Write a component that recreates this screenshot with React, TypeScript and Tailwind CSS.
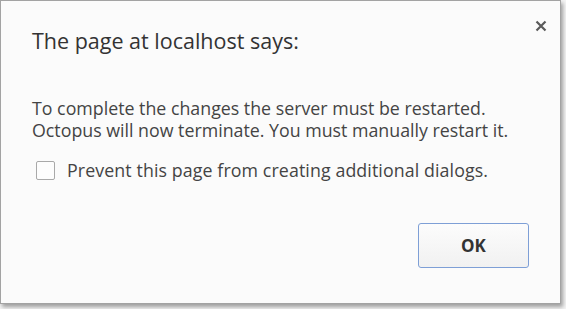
export default function App() {
  return (
    <div className="h-[309px] w-[566px] overflow-hidden bg-[#f4f4f4]">
      <div
        className="relative h-[304px] w-[561px] border border-[#a3a3a3] bg-[#fbfbfb] shadow-[2px_3px_4px_rgba(0,0,0,0.35)]"
        style={{ fontFamily: '"Open Sans", "Noto Sans", sans-serif' }}
      >
        <button className="absolute right-[10px] top-[16px] flex h-[18px] w-[18px] items-center justify-center text-[#5a5a5a]">
          <svg width="12" height="12" viewBox="0 0 12 12">
            <path d="M1.5 1.5 L10.5 10.5 M10.5 1.5 L1.5 10.5" stroke="currentColor" strokeWidth="2.2" />
          </svg>
        </button>
        <div className="flex flex-col pl-[31px] pr-[20px]">
          <h1 className="mt-[26px] text-[21.5px] leading-[28px] text-[#333333]">The page at localhost says:</h1>
          <div className="mt-[42px] text-[17.8px] leading-[22px] text-[#444444]">
            <p>To complete the changes the server must be restarted.</p>
            <p>Octopus will now terminate. You must manually restart it.</p>
          </div>
          <label className="mt-[18px] flex items-center gap-[12px] pl-[4px] text-[17.8px] leading-[22px] tracking-[0.1px] text-[#444444]">
            <span className="h-[19px] w-[19px] rounded-[2px] border border-[#a9a9a9] bg-[#fdfdfd]" />
            Prevent this page from creating additional dialogs.
          </label>
          <div className="mt-[42px] flex justify-end pr-[11px]">
            <button className="h-[45px] w-[111px] rounded-[3px] border border-[#7e9fd6] bg-gradient-to-b from-[#fcfcfc] to-[#f1f1f1] text-[17px] font-bold text-[#333333]">
              OK
            </button>
          </div>
        </div>
      </div>
    </div>
  );
}
